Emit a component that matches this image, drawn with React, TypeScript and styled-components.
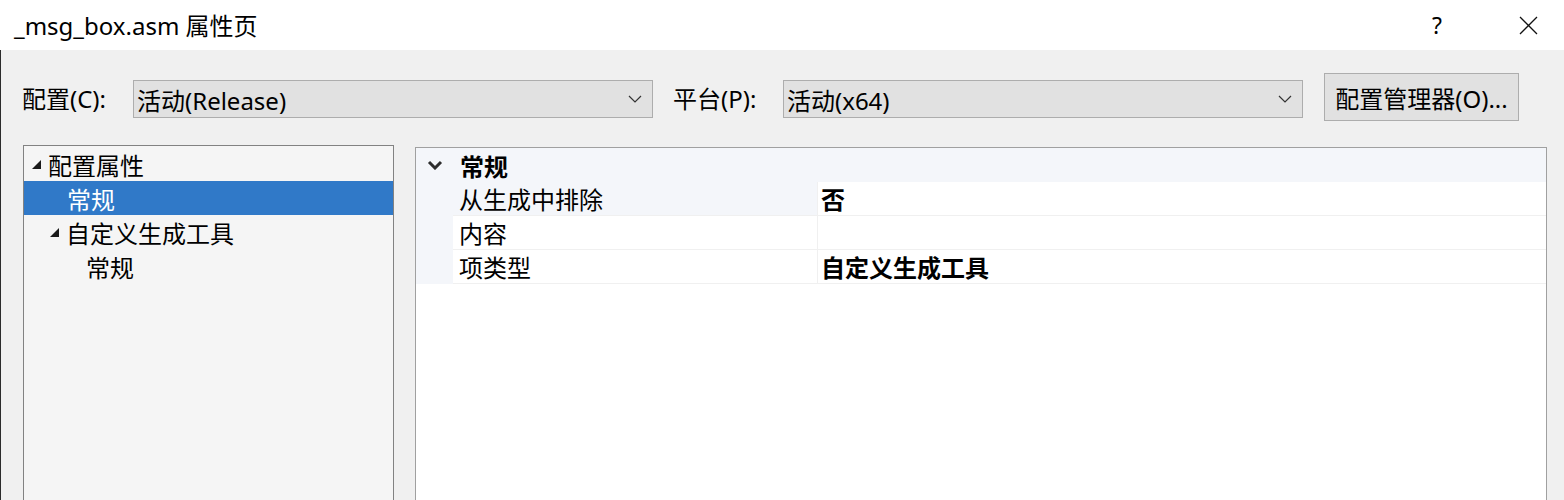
import React from "react";
import styled, { createGlobalStyle } from "styled-components";

const FONT = `"Noto Sans", "Noto Sans CJK SC", sans-serif`;
const FS = "24px";

const GlobalStyle = createGlobalStyle`
  html, body { margin: 0; padding: 0; background: #f0f0f0; overflow: hidden; }
  body { font-family: ${FONT}; color: #000; }
  * { box-sizing: border-box; }
`;

const Window = styled.div`
  width: 1564px;
  height: 500px;
  display: flex;
  flex-direction: column;
  overflow: hidden;
`;

const TitleBar = styled.div`
  height: 50px;
  flex: none;
  background: #ffffff;
  display: flex;
  align-items: center;
  padding-left: 14px;
`;

const Title = styled.div`
  font-size: ${FS};
  flex: 1;
  margin-top: -2px;
`;

const TitleButton = styled.div<{ $w: number }>`
  width: ${(p) => p.$w}px;
  height: 50px;
  display: flex;
  align-items: center;
  justify-content: center;
  font-size: 23px;
`;

const Body = styled.div`
  flex: 1;
  display: flex;
  flex-direction: column;
  border-left: 1px solid #2b2b2b;
  background: #f0f0f0;
  min-height: 0;
`;

const Toolbar = styled.div`
  display: flex;
  align-items: center;
  height: 48px;
  margin-top: 23px;
  padding-left: 21px;
`;

const Label = styled.div<{ $w: number; $pl?: number }>`
  width: ${(p) => p.$w}px;
  padding-left: ${(p) => p.$pl ?? 0}px;
  font-size: ${FS};
  flex: none;
  white-space: nowrap;
`;

const Combo = styled.div`
  width: 520px;
  height: 38px;
  margin-top: 4px;
  flex: none;
  background: #e1e1e1;
  border: 1px solid #adadad;
  display: flex;
  align-items: center;
  padding-left: 3px;
  padding-right: 10px;
  font-size: ${FS};
`;

const ComboText = styled.div`
  flex: 1;
`;

const Button = styled.div`
  width: 195px;
  height: 48px;
  margin-left: 21px;
  flex: none;
  background: #e1e1e1;
  border: 1px solid #adadad;
  display: flex;
  align-items: center;
  justify-content: center;
  font-size: ${FS};
  white-space: nowrap;
`;

const Panels = styled.div`
  flex: 1;
  display: flex;
  margin-top: 24px;
  padding-left: 22px;
  min-height: 0;
`;

const Tree = styled.div`
  width: 371px;
  flex: none;
  background: #f5f5f5;
  border: 1px solid #828282;
  border-bottom: none;
  padding-top: 1px;
`;

const TreeRow = styled.div<{ $indent: number; $selected?: boolean }>`
  height: 34px;
  display: flex;
  align-items: center;
  padding-left: ${(p) => p.$indent}px;
  font-size: ${FS};
  background: ${(p) => (p.$selected ? "#3079c8" : "transparent")};
  color: ${(p) => (p.$selected ? "#ffffff" : "#000000")};
`;

const Arrow = styled.span`
  width: 17px;
  display: flex;
  align-items: center;
`;

const Grid = styled.div`
  flex: none;
  width: 1132px;
  margin-left: 21px;
  margin-top: 2px;
  background: #ffffff;
  border: 1px solid #a0a0a0;
  border-bottom: none;
  display: flex;
  flex-direction: column;
`;

const CategoryRow = styled.div`
  height: 34px;
  background: #f4f6fa;
  display: flex;
  align-items: center;
  font-size: ${FS};
  font-weight: 700;
`;

const CategoryText = styled.span`
  padding-left: 7px;
`;

const Gutter = styled.div`
  width: 37px;
  flex: none;
  display: flex;
  justify-content: center;
  align-items: center;
  align-self: stretch;
  background: #f4f6fa;
`;

const PropRow = styled.div`
  height: 34px;
  display: flex;
  font-size: ${FS};
`;

const NameCell = styled.div<{ $hl?: boolean }>`
  width: 365px;
  flex: none;
  display: flex;
  align-items: center;
  padding-left: 6px;
  background: ${(p) => (p.$hl ? "#f4f6fa" : "#ffffff")};
  border-bottom: 1px solid #f0f0f0;
  border-right: 1px solid #f0f0f0;
`;

const ValueCell = styled.div`
  flex: 1;
  display: flex;
  align-items: center;
  padding-left: 3px;
  font-weight: 700;
  border-bottom: 1px solid #f0f0f0;
`;

const Chevron = () => (
  <svg width="14" height="8" viewBox="0 0 14 8">
    <polyline points="1,1 7,7 13,1" fill="none" stroke="#333" strokeWidth="1.2" />
  </svg>
);

const Tri = () => (
  <svg width="11" height="11" viewBox="0 0 11 11">
    <polygon points="10,1 10,10 1,10" fill="#1a1a1a" />
  </svg>
);

const props = [
  { name: "从生成中排除", value: "否", hl: true },
  { name: "内容", value: "" },
  { name: "项类型", value: "自定义生成工具" },
];

export default function App() {
  return (
    <Window>
      <GlobalStyle />
      <TitleBar>
        <Title>_msg_box.asm 属性页</Title>
        <TitleButton $w={110}>?</TitleButton>
        <TitleButton $w={72}>
          <svg width="19" height="19" viewBox="0 0 19 19">
            <path d="M1 1 L18 18 M18 1 L1 18" stroke="#111" strokeWidth="1.3" />
          </svg>
        </TitleButton>
      </TitleBar>
      <Body>
        <Toolbar>
          <Label $w={111}>配置(C):</Label>
          <Combo>
            <ComboText>活动(Release)</ComboText>
            <Chevron />
          </Combo>
          <Label $w={130} $pl={20}>平台(P):</Label>
          <Combo>
            <ComboText>活动(x64)</ComboText>
            <Chevron />
          </Combo>
          <Button>配置管理器(O)...</Button>
        </Toolbar>
        <Panels>
          <Tree>
            <TreeRow $indent={7}>
              <Arrow><Tri /></Arrow>配置属性
            </TreeRow>
            <TreeRow $indent={43} $selected>常规</TreeRow>
            <TreeRow $indent={25}>
              <Arrow><Tri /></Arrow>自定义生成工具
            </TreeRow>
            <TreeRow $indent={62}>常规</TreeRow>
          </Tree>
          <Grid>
            <CategoryRow>
              <Gutter>
                <svg width="16" height="10" viewBox="0 0 16 10">
                  <polyline points="2,2 8,8 14,2" fill="none" stroke="#2d2d2d" strokeWidth="3" />
                </svg>
              </Gutter>
              <CategoryText>常规</CategoryText>
            </CategoryRow>
            {props.map((p) => (
              <PropRow key={p.name}>
                <Gutter />
                <NameCell $hl={p.hl}>{p.name}</NameCell>
                <ValueCell>{p.value}</ValueCell>
              </PropRow>
            ))}
          </Grid>
        </Panels>
      </Body>
    </Window>
  );
}
